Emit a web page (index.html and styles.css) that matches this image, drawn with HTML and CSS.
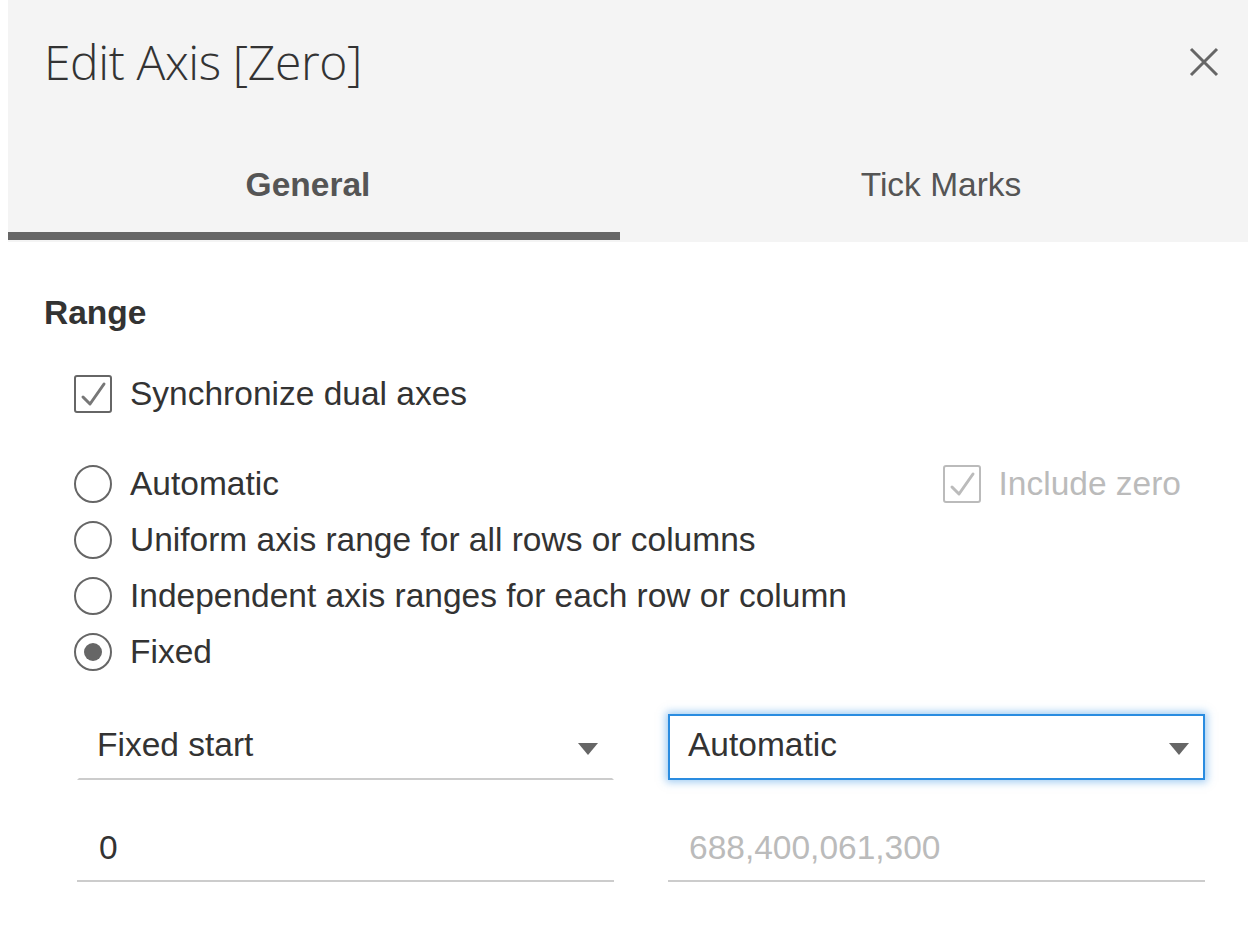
FILE: index.html
```html
<!DOCTYPE html>
<html>
<head>
<meta charset="utf-8">
<link rel="stylesheet" href="styles.css">
</head>
<body>
<div class="dialog">
  <div class="header">
    <div class="title-row">
      <h1 class="title">Edit Axis [Zero]</h1>
      <button class="close" aria-label="Close">
        <svg width="30" height="30" viewBox="0 0 30 30"><path d="M2 2 L28 28 M28 2 L2 28" stroke="#666" stroke-width="3" fill="none"/></svg>
      </button>
    </div>
    <div class="tabs">
      <div class="tab active">General</div>
      <div class="tab">Tick Marks</div>
    </div>
  </div>
  <div class="content">
    <div class="section-title">Range</div>
    <label class="check-row sync">
      <svg class="box" width="38" height="38" viewBox="0 0 38 38"><rect x="1" y="1" width="36" height="36" rx="2" fill="#fff" stroke="#666" stroke-width="2"/><path d="M9 22 L16 29 L30 9" stroke="#777" stroke-width="3" fill="none" stroke-linejoin="round" stroke-linecap="round"/></svg>
      <span>Synchronize dual axes</span>
    </label>
    <div class="options">
      <div class="opt-row">
        <label class="radio-row">
          <span class="radio"></span><span>Automatic</span>
        </label>
        <label class="check-row disabled">
          <svg class="box" width="38" height="38" viewBox="0 0 38 38"><rect x="1" y="1" width="36" height="36" rx="2" fill="#fff" stroke="#bbb" stroke-width="2"/><path d="M9 22 L16 29 L30 9" stroke="#bbb" stroke-width="3" fill="none" stroke-linejoin="round" stroke-linecap="round"/></svg>
          <span>Include zero</span>
        </label>
      </div>
      <label class="radio-row"><span class="radio"></span><span>Uniform axis range for all rows or columns</span></label>
      <label class="radio-row"><span class="radio"></span><span>Independent axis ranges for each row or column</span></label>
      <label class="radio-row"><span class="radio checked"></span><span>Fixed</span></label>
    </div>
    <div class="fields">
      <div class="select"><span>Fixed start</span><span class="arrow"></span></div>
      <div class="select focused"><span>Automatic</span><span class="arrow"></span></div>
      <div class="input">0</div>
      <div class="input placeholder">688,400,061,300</div>
    </div>
  </div>
</div>
</body>
</html>
```
FILE: styles.css
```css
html, body {
  margin: 0;
  padding: 0;
  background: #fff;
}
body {
  font-family: "Liberation Sans", Arial, sans-serif;
  color: #333;
}
.dialog {
  margin-left: 8px;
  width: 1240px;
}
.header {
  background: #f4f4f4;
  padding-bottom: 2px;
}
.title-row {
  height: 122px;
  display: flex;
  align-items: center;
  justify-content: space-between;
  padding: 0 29px 0 36px;
  box-sizing: border-box;
}
.title {
  margin: 0;
  font-family: "Open Sans", sans-serif;
  font-weight: 300;
  font-size: 48px;
  color: #333;
  letter-spacing: -0.4px;
  position: relative;
  top: 0;
}
.close {
  border: 0;
  background: transparent;
  padding: 0;
  width: 30px;
  height: 30px;
  display: flex;
  position: relative;
  top: 1px;
}
.tabs {
  display: grid;
  grid-template-columns: 612px 628px;
  height: 118px;
}
.tab {
  display: flex;
  align-items: center;
  justify-content: center;
  font-size: 33.5px;
  color: #555;
  padding-top: 16px;
  border-bottom: 8px solid transparent;
  box-sizing: border-box;
}
.tab.active {
  font-weight: bold;
  border-bottom-color: #666;
  padding-right: 12px;
}
.tab:not(.active) {
  padding-left: 14px;
}
.content {
  padding-left: 36px;
  font-size: 33.5px;
}
.section-title {
  font-weight: bold;
  line-height: 40px;
  margin-top: 51px;
  color: #333;
}
.check-row {
  display: flex;
  align-items: center;
  gap: 18px;
  line-height: 40px;
}
.check-row .box {
  display: block;
  flex: none;
}
.sync {
  margin-top: 41px;
  margin-left: 30px;
}
.disabled {
  color: #bbb;
}
.options {
  margin-top: 42px;
  margin-left: 30px;
  width: 1107px;
}
.opt-row {
  display: flex;
  align-items: center;
  justify-content: space-between;
}
.radio-row {
  display: flex;
  align-items: center;
  gap: 18px;
  height: 56px;
}
.radio {
  width: 38px;
  height: 38px;
  border: 2.5px solid #666;
  border-radius: 50%;
  box-sizing: border-box;
  display: flex;
  align-items: center;
  justify-content: center;
  background: #fff;
}
.radio.checked::after {
  content: "";
  width: 18px;
  height: 18px;
  border-radius: 50%;
  background: #666;
}
.fields {
  display: grid;
  grid-template-columns: 537px 537px;
  column-gap: 54px;
  row-gap: 36px;
  margin-left: 33px;
  margin-top: 34px;
}
.select {
  height: 66px;
  box-sizing: border-box;
  border: 2px solid transparent;
  border-bottom-color: #ccc;
  display: flex;
  align-items: center;
  justify-content: space-between;
  padding: 0 14px 0 18px;
  color: #333;
}
.select > span:first-child {
  position: relative;
  top: -2px;
}
.select.focused {
  border: 2px solid #2a8ce0;
  box-shadow: 0 0 8px 2px rgba(60, 150, 230, 0.5);
  background: #fff;
}
.arrow {
  width: 0;
  height: 0;
  border-left: 10px solid transparent;
  border-right: 10px solid transparent;
  border-top: 12px solid #666;
  margin-top: 4px;
}
.input {
  height: 66px;
  box-sizing: border-box;
  border-bottom: 2px solid #ccc;
  display: flex;
  align-items: center;
  padding-left: 22px;
  color: #333;
}
.input.placeholder {
  color: #bbb;
  padding-left: 21px;
}
```
